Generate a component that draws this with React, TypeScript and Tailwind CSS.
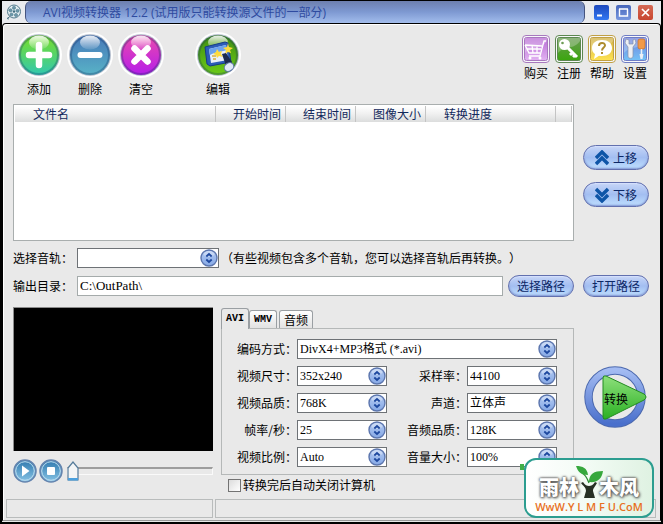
import { useState, type ReactNode } from "react";

const columns = [
  { title: "文件名", className: "pl-[18px] text-left" },
  { title: "开始时间", className: "w-[70px] pr-1 text-right" },
  { title: "结束时间", className: "w-[70px] pr-1 text-right" },
  { title: "图像大小", className: "w-[70px] pr-1 text-right" },
  { title: "转换进度", className: "w-[130px] pl-[18px] text-left" },
  { title: "", className: "w-4" },
];

const videoOptions = [
  { id: "size", label: "视频尺寸：", value: "352x240" },
  { id: "rate", label: "采样率：", value: "44100" },
  { id: "quality", label: "视频品质：", value: "768K" },
  { id: "channel", label: "声道：", value: "立体声" },
  { id: "fps", label: "帧率/秒：", value: "25" },
  { id: "audio", label: "音频品质：", value: "128K" },
  { id: "ratio", label: "视频比例：", value: "Auto" },
  { id: "volume", label: "音量大小：", value: "100%" },
];

const tabs = ["AVI", "WMV", "音频"];

const serif = "font-['Liberation_Serif','Noto_Sans_CJK_SC',serif]";

/* DROP-DOWN */
function Select({ id, value }: { id: string; value: string }) {
  return (
    <div className="relative min-w-0 flex-1">
      <select
        id={id}
        defaultValue={value}
        className={`block h-5 w-full appearance-none border border-[#6e7276] bg-white pl-0.5 pr-5 text-xs leading-4 text-black ${serif}`}
      >
        <option>{value}</option>
      </select>
      <svg viewBox="0 0 18 18" className="pointer-events-none absolute top-px right-px h-[18px] w-[18px]">
        <circle cx="9" cy="9" r="8" fill="url(#knob)" stroke="#5c76ae" strokeWidth="1.4" />
        <ellipse cx="9" cy="5" rx="5.5" ry="3" fill="#fff" opacity=".35" />
        <path d="M6.3 7.5 9 5l2.7 2.5M6.3 10.5 9 13l2.7-2.5" fill="none" stroke="#1d489f" strokeWidth="1.8" />
      </svg>
    </div>
  );
}

/* BLUE PILL BUTTON */
function PillButton({ children, tall }: { children: ReactNode; tall?: boolean }) {
  return (
    <button
      className={`flex w-[66px] shrink-0 items-center justify-center gap-1 rounded-full border border-[#6270ae] bg-linear-to-b from-[#c6d5f7] via-[#a3bef1] to-[#bfe0ff] text-xs text-[#0c2866] shadow-[inset_0_-1px_2px_#7d92d0,inset_0_1px_1px_#dce6ff] ${
        tall ? "h-[25px]" : "h-[22px]"
      }`}
    >
      {children}
    </button>
  );
}

function RoundIcon({ fill, children }: { fill: string; children: ReactNode }) {
  return (
    <svg viewBox="0 0 46 46" className="h-[46px] w-[46px]">
      <circle cx="23" cy="23" r="23" fill="#fefefe" />
      <circle cx="23" cy="23" r="20" fill={fill} />
      <circle cx="23" cy="23" r="19.5" fill="none" stroke="#103060" strokeOpacity=".3" strokeWidth="3" />
      <ellipse cx="23" cy="10.5" rx="10" ry="7" fill="url(#gloss)" />
      {children}
    </svg>
  );
}

function SquareIcon({ fill, edge, children }: { fill: string; edge: string; children: ReactNode }) {
  return (
    <svg viewBox="0 0 28 28" className="h-7 w-7">
      <rect x=".5" y=".5" width="27" height="27" rx="3.5" fill="#f8f8fb" stroke={edge} />
      <rect x="2.5" y="2.5" width="23" height="23" rx="2" fill={fill} stroke={edge} />
      <path d="M3 3h22v3C19 15 10 10 3 18z" fill="#fff" opacity=".25" />
      {children}
    </svg>
  );
}

const tools = [
  {
    label: "添加",
    className: "",
    icon: (
      <RoundIcon fill="url(#green)">
        <path d="M23 13v20M13 23h20" stroke="#fff" strokeWidth="6.5" strokeLinecap="round" />
      </RoundIcon>
    ),
  },
  {
    label: "删除",
    className: "",
    icon: (
      <RoundIcon fill="url(#blue)">
        <path d="M13.5 23h19" stroke="#fff" strokeWidth="6" strokeLinecap="round" />
      </RoundIcon>
    ),
  },
  {
    label: "清空",
    className: "",
    icon: (
      <RoundIcon fill="url(#pink)">
        <path d="m16.5 16.5 13 13M29.5 16.5l-13 13" stroke="#fff" strokeWidth="6.5" strokeLinecap="round" />
      </RoundIcon>
    ),
  },
  {
    label: "编辑",
    className: "ml-[26px]",
    icon: (
      <RoundIcon fill="url(#lime)">
        <path d="m10 15 20-5 3 1 3 19-21 4-3-2z" fill="#2c5cb8" stroke="#163d87" />
        <path d="m14 17 17-4 2 15-17 3z" fill="#e9effb" />
        <path d="m14 17 17-4 1 5c-7 2-12 2-17 5z" fill="#6ca3ee" />
        <path d="m22 17 2 3 3-1-1 3 2 3-4-1-2 2-1-3-3-1 3-2zM33 11l1 4 4 1-3 2 1 3-3-1-3 2 1-4-3-2 4-1z" fill="#ffdb3d" />
        <path d="M17 24h4M18 27h3" stroke="#d8b23a" strokeWidth="1.3" />
        <path d="m27 22 4-1 6 9-2 5-4-1z" fill="#1d2b50" />
        <ellipse cx="34" cy="35" rx="5" ry="4" transform="rotate(-35 34 35)" fill="#dfe9f8" stroke="#6079a8" />
      </RoundIcon>
    ),
  },
];

const links = [
  {
    label: "购买",
    icon: (
      <SquareIcon fill="url(#violet)" edge="#a779bd">
        <path d="M24 6h-2l-4 15H7M3 10l4 8h11M3 10l17 1M5 14h14M10 10l1 8M15 11v7" fill="none" stroke="#fff" strokeWidth="1.3" />
        <circle cx="8" cy="23" r="1.5" fill="#fff" />
        <circle cx="18" cy="23" r="1.5" fill="#fff" />
      </SquareIcon>
    ),
  },
  {
    label: "注册",
    icon: (
      <SquareIcon fill="url(#leaf)" edge="#5c8750">
        <circle cx="9.5" cy="9.5" r="5.5" fill="#fff" />
        <circle cx="7.5" cy="8" r="1.3" fill="#6c9c54" />
        <path d="m12 12 10 10M17 18l-2 2M20 20l-2 2" stroke="#fff" strokeWidth="3" />
      </SquareIcon>
    ),
  },
  {
    label: "帮助",
    icon: (
      <SquareIcon fill="url(#gold)" edge="#c0a045">
        <path d="M14 5c6 0 10 3 10 8s-4 8-10 8c-1 0-2 0-3-.3L6 24l1-5c-2-1-3-4-3-6 0-5 4-8 10-8z" fill="#fff" />
        <path d="M11 11c0-4 6-4 6-.5 0 2-3 2-3 5M14 17v2" fill="none" stroke="#ad8c2e" strokeWidth="2" />
      </SquareIcon>
    ),
  },
  {
    label: "设置",
    icon: (
      <SquareIcon fill="url(#sky)" edge="#6f7cc4">
        <path d="M5 4 4 8l3 4v9c0 3 5 3 5 0v-9l3-4-1-4-2 1v4H8V5z" fill="#eceff4" stroke="#8890a8" strokeWidth=".7" />
        <rect x="17" y="4" width="7" height="10" rx="2" fill="#f29a49" stroke="#c76e29" strokeWidth=".7" />
        <path d="M20.5 14v6" stroke="#edf0f6" strokeWidth="1.6" />
        <path d="M18.5 19h4l-1 5h-2z" fill="#edf0f6" />
      </SquareIcon>
    ),
  },
];

/* SHARED GRADIENTS */
function Gradients() {
  const stops: [string, string, string][] = [
    ["green", "#79df24", "#31c8b0"],
    ["blue", "#4777b8", "#58b3c7"],
    ["pink", "#ea4aac", "#b51dea"],
    ["lime", "#3f8d12", "#6ccb18"],
    ["violet", "#b76bd3", "#e2b2f2"],
    ["leaf", "#6b9b55", "#3ba60e"],
    ["gold", "#cfae45", "#ffe352"],
    ["sky", "#6f80dc", "#73c2f6"],
    ["knob", "#b4cbf2", "#86a9e6"],
    ["media", "#2f78ad", "#87c4e6"],
    ["ring", "#a3bbf2", "#4a70cc"],
    ["arrow", "#8ee07c", "#2bb023"],
  ];
  return (
    <svg className="absolute h-0 w-0" aria-hidden="true">
      <defs>
        {stops.map(([id, from, to]) => (
          <linearGradient key={id} id={id} x1="0" y1="0" x2="0" y2="1">
            <stop offset="0" stopColor={from} />
            <stop offset="1" stopColor={to} />
          </linearGradient>
        ))}
        <linearGradient id="gloss" x1="0" y1="0" x2="0" y2="1">
          <stop offset="0" stopColor="#fff" stopOpacity=".9" />
          <stop offset="1" stopColor="#fff" stopOpacity=".1" />
        </linearGradient>
      </defs>
    </svg>
  );
}

function TitleBar() {
  return (
    <header className="flex h-[22px] items-center bg-[#e9ebef]">
      <div className="flex w-[23px] shrink-0 justify-center">
        <svg viewBox="0 0 16 16" className="h-4 w-4">
          <circle cx="8" cy="7.5" r="6.5" fill="#e4eff3" stroke="#537b8c" />
          <circle cx="8" cy="7.5" r="1.2" fill="#416d80" />
          <g fill="#6d99aa" stroke="#416d80" strokeWidth=".5">
            <circle cx="8" cy="3.8" r="1.6" />
            <circle cx="11.5" cy="6.8" r="1.6" />
            <circle cx="10" cy="11" r="1.6" />
            <circle cx="5.5" cy="10.5" r="1.6" />
            <circle cx="4.5" cy="6.3" r="1.6" />
          </g>
          <path d="M4 12.5 1 14.5l2 .5" fill="none" stroke="#537b8c" />
        </svg>
      </div>
      <h1 className="h-full flex-1 truncate rounded-md border-x border-[#45547f] bg-linear-to-b from-[#6d7fae] via-[#7e99d2] to-[#a3bdec] pl-[17px] font-['Open_Sans','Noto_Sans_CJK_SC',sans-serif] text-xs leading-6 text-[#2f4ba0]">
        AVI视频转换器 12.2 (试用版只能转换源文件的一部分)
      </h1>
      <div className="flex gap-[7px] pr-2 pl-[9px]">
        <button aria-label="最小化" className="h-[15px] w-[15px] rounded-xs bg-linear-to-b from-[#1d49bd] to-[#3277f2]">
          <svg viewBox="0 0 15 15">
            <path d="M3 10.5h5" stroke="#fff" strokeWidth="2" />
          </svg>
        </button>
        <button aria-label="最大化" className="h-[15px] w-[15px] rounded-xs bg-linear-to-b from-[#4766ba] to-[#7898e0]">
          <svg viewBox="0 0 15 15">
            <path d="M3.5 4v7h8V4M3 4h9" fill="none" stroke="#fff" strokeWidth="1.4" />
          </svg>
        </button>
        <button aria-label="关闭" className="h-[15px] w-[15px] rounded-xs bg-linear-to-b from-[#d46955] to-[#c8452f]">
          <svg viewBox="0 0 15 15">
            <path d="m4 4 7 7M11 4l-7 7" stroke="#fff" strokeWidth="1.7" />
          </svg>
        </button>
      </div>
    </header>
  );
}

function Toolbar() {
  return (
    <div className="flex items-start justify-between pl-[3px]">
      <div className="flex gap-[5px]">
        {tools.map((tool) => (
          <button key={tool.label} className={`flex flex-col items-center gap-[3px] ${tool.className}`}>
            {tool.icon}
            <span>{tool.label}</span>
          </button>
        ))}
      </div>
      <div className="flex gap-[5px] pt-[3px]">
        {links.map((link) => (
          <button key={link.label} className="flex w-7 flex-col items-center gap-0.5">
            {link.icon}
            <span>{link.label}</span>
          </button>
        ))}
      </div>
    </div>
  );
}

function FileList() {
  return (
    <div className="min-w-0 flex-1 border border-[#a9aeae] bg-white p-px">
      <table className="w-full table-fixed border-collapse">
        <thead>
          <tr className="h-4 bg-linear-to-b from-white via-[#f0f0f0] to-[#dcdddd] text-[#12295c]">
            {columns.map((column, i) => (
              <th key={i} className={`border-r border-[#c4c4c4] p-0 font-normal ${column.className}`}>
                {column.title}
              </th>
            ))}
          </tr>
        </thead>
        <tbody />
      </table>
    </div>
  );
}

/* VIDEO PREVIEW + PLAYER CONTROLS */
function Preview() {
  const [position, setPosition] = useState(0);

  return (
    <div className="w-[200px] shrink-0">
      <div className="h-36 border-t border-l border-[#8c8c8c] bg-black" />
      <div className="flex items-center pt-2">
        <button aria-label="播放" className="mr-0.5 h-6 w-6">
          <svg viewBox="0 0 24 24">
            <circle cx="12" cy="12" r="11" fill="url(#media)" stroke="#6484ae" strokeWidth="1.5" />
            <circle cx="12" cy="12" r="9.3" fill="none" stroke="#c2dff0" />
            <path d="m9 6.5 7.5 5.5L9 17.5z" fill="#fff" />
          </svg>
        </button>
        <button aria-label="停止" className="mr-1 h-6 w-6">
          <svg viewBox="0 0 24 24">
            <circle cx="12" cy="12" r="11" fill="url(#media)" stroke="#6484ae" strokeWidth="1.5" />
            <circle cx="12" cy="12" r="9.3" fill="none" stroke="#c2dff0" />
            <rect x="8" y="8" width="8" height="8" rx="1" fill="#fff" />
          </svg>
        </button>
        <div className="relative flex flex-1 items-center">
          <input
            type="range"
            aria-label="播放进度"
            value={position}
            onChange={(e) => setPosition(Number(e.target.value))}
            className="h-2 w-full appearance-none border border-t-2 border-[#fafafa] border-t-[#9d9d9d] bg-[#e9e9e9] [&::-webkit-slider-thumb]:h-5 [&::-webkit-slider-thumb]:w-3 [&::-webkit-slider-thumb]:appearance-none"
          />
          <svg
            viewBox="0 0 12 20"
            className="pointer-events-none absolute h-5 w-3"
            style={{ left: `${position * 0.92}%` }}
          >
            <path d="M1 7 6 1l5 6v12H1z" fill="#f3f5f6" stroke="#557b9a" strokeWidth="1.2" />
            <path d="M1 17h10v2.5H1z" fill="#4ba0dd" />
          </svg>
        </div>
      </div>
    </div>
  );
}

function Settings() {
  const [active, setActive] = useState("AVI");

  return (
    <div className="min-w-0 flex-1">
      <div role="tablist" className="flex h-[21px] items-end">
        {tabs.map((tab) => (
          <button
            key={tab}
            role="tab"
            aria-selected={active === tab}
            onClick={() => setActive(tab)}
            className={`rounded-t-[3px] border border-b-0 border-[#9a9fa3] ${
              tab === active
                ? "z-10 -mb-px h-[21px] bg-[#e9e9e9]"
                : "mr-0.5 h-[18px] bg-linear-to-b from-white to-[#e2e2e2]"
            } ${
              tab === "音频"
                ? "w-[34px]"
                : "w-7 font-['Liberation_Mono',monospace] text-[10px] font-bold"
            }`}
          >
            {tab}
          </button>
        ))}
      </div>
      <div className="flex flex-col gap-[7px] border border-[#b5b8b8] pt-2.5 pr-4 pb-[7px] pl-[15px]">
        <div className="flex items-center">
          <label htmlFor="codec" className="w-[60px] shrink-0">
            编码方式：
          </label>
          <Select id="codec" value="DivX4+MP3格式 (*.avi)" />
        </div>
        <div className="grid grid-cols-2 gap-x-5 gap-y-[7px]">
          {videoOptions.map((option) => (
            <div key={option.id} className="flex items-center">
              <label htmlFor={option.id} className="w-[60px] shrink-0 text-right">
                {option.label}
              </label>
              <Select id={option.id} value={option.value} />
            </div>
          ))}
        </div>
      </div>
      <label className="flex items-center gap-0.5 pt-0.5 pl-[7px]">
        <input
          type="checkbox"
          className="h-[13px] w-[13px] appearance-none border border-[#737373] bg-linear-to-br from-[#dcdcdc] to-white checked:bg-[#3d6fc4]"
        />
        转换完后自动关闭计算机
      </label>
    </div>
  );
}

/* SITE BADGE */
function Watermark() {
  return (
    <a
      href="#ylmfu"
      className="absolute right-[7px] bottom-1 flex h-[60px] w-[130px] flex-col items-center justify-end rounded-xl border-2 border-[#2c9d90] bg-linear-to-r from-white via-[#f2fbf4] to-[#dff2e2] leading-none"
    >
      <span className="absolute top-1 -left-1.5 h-1.5 w-1 bg-[#3fae49]" />
      <span className="flex items-end text-xl leading-6 font-black text-white [text-shadow:0_0_2px_#555,0_0_3px_#555,1px_1px_3px_#666]">
        雨林
        <svg viewBox="0 0 28 34" className="-mx-1 h-[34px] w-7">
          <path d="M8 17c2 3 4 4 6 4s4-1 6-4l2 1c-2 4-4 5-4 8l2 7H9l2-7c0-4-3-5-5-8z" fill="#263024" />
          <path d="M14 18c-2-5-3-8-7-10" fill="none" stroke="#2b8c32" strokeWidth="1.3" />
          <path d="M1 1c7 0 11 2 12 9C6 10 3 7 1 1zM14 17c0-8 5-11 14-11-1 8-6 12-14 11z" fill="#36a83d" />
        </svg>
        木风
      </span>
      <span className="pt-0.5 pb-1 font-['Open_Sans',sans-serif] text-[11px] font-semibold text-[#e8701e]">
        WwW.Y L M F U.CoM
      </span>
    </a>
  );
}

export default function App() {
  return (
    <div className="relative min-h-screen border-x-2 border-t border-b-2 border-black bg-[#e9e9e9] font-['Noto_Sans_CJK_SC',sans-serif] text-xs leading-4 text-black">
      <Gradients />
      <TitleBar />
      <main className="flex flex-col rounded-t-sm border border-black border-b-[#999] shadow-[inset_1px_1px_#fff]">
        <div className="flex flex-col pt-2 pr-[11px] pl-2.5">
          <Toolbar />

          <div className="mt-[7px] flex h-[137px] gap-[9px]">
            <FileList />
            <div className="flex flex-col gap-3 pt-[41px]">
              <PillButton tall>
                <svg viewBox="0 0 14 16" className="h-4 w-3.5">
                  <path d="m1 8 6-6 6 6M1 14l6-6 6 6" fill="none" stroke="#0e55a7" strokeWidth="3.4" />
                </svg>
                上移
              </PillButton>
              <PillButton tall>
                <svg viewBox="0 0 14 16" className="h-4 w-3.5">
                  <path d="m1 2 6 6 6-6M1 8l6 6 6-6" fill="none" stroke="#0e55a7" strokeWidth="3.4" />
                </svg>
                下移
              </PillButton>
            </div>
          </div>

          {/* AUDIO TRACK */}
          <div className="mt-[7px] flex items-center">
            <label htmlFor="track" className="w-16 shrink-0">
              选择音轨：
            </label>
            <div className="flex w-[142px]">
              <Select id="track" value="" />
            </div>
            <p className="pl-0.5 [text-spacing-trim:space-all]">（有些视频包含多个音轨，您可以选择音轨后再转换。）</p>
          </div>

          {/* OUTPUT PATH */}
          <div className="mt-[7px] flex items-center">
            <label htmlFor="output" className="w-16 shrink-0">
              输出目录：
            </label>
            <input
              id="output"
              defaultValue="C:\OutPath\"
              className={`mr-[5px] h-5 min-w-0 flex-1 border border-[#a5abab] bg-white pl-0.5 text-[13px] ${serif}`}
            />
            <PillButton>选择路径</PillButton>
            <span className="w-[9px]" />
            <PillButton>打开路径</PillButton>
          </div>

          <div className="mt-2.5 flex">
            <Preview />
            <span className="w-2" />
            <Settings />
            <button className="mt-[57px] ml-[9px] grid h-[66px] w-[66px] shrink-0 place-items-center">
              <svg viewBox="0 0 66 66" className="col-start-1 row-start-1 h-[66px] w-[66px]">
                <circle cx="32" cy="33" r="26.5" fill="none" stroke="#4c69ae" strokeWidth="8.5" />
                <circle cx="32" cy="33" r="26.5" fill="none" stroke="url(#ring)" strokeWidth="6.5" />
                <path d="M20 14q0-3 3-2l38 18q4 3 0 6L23 55q-3 1-3-2z" fill="url(#arrow)" stroke="#238b20" />
              </svg>
              <span className="col-start-1 row-start-1 pt-1">转换</span>
            </button>
          </div>
        </div>

        {/* STATUS BAR */}
        <div className="mt-1.5 mb-0.5 flex gap-0.5 pr-1 pl-[3px]">
          <div className="h-[19px] w-[207px] border border-[#b9bcbc]" />
          <div className="h-[19px] flex-1 border border-[#b9bcbc]" />
        </div>
      </main>
      <Watermark />
    </div>
  );
}
